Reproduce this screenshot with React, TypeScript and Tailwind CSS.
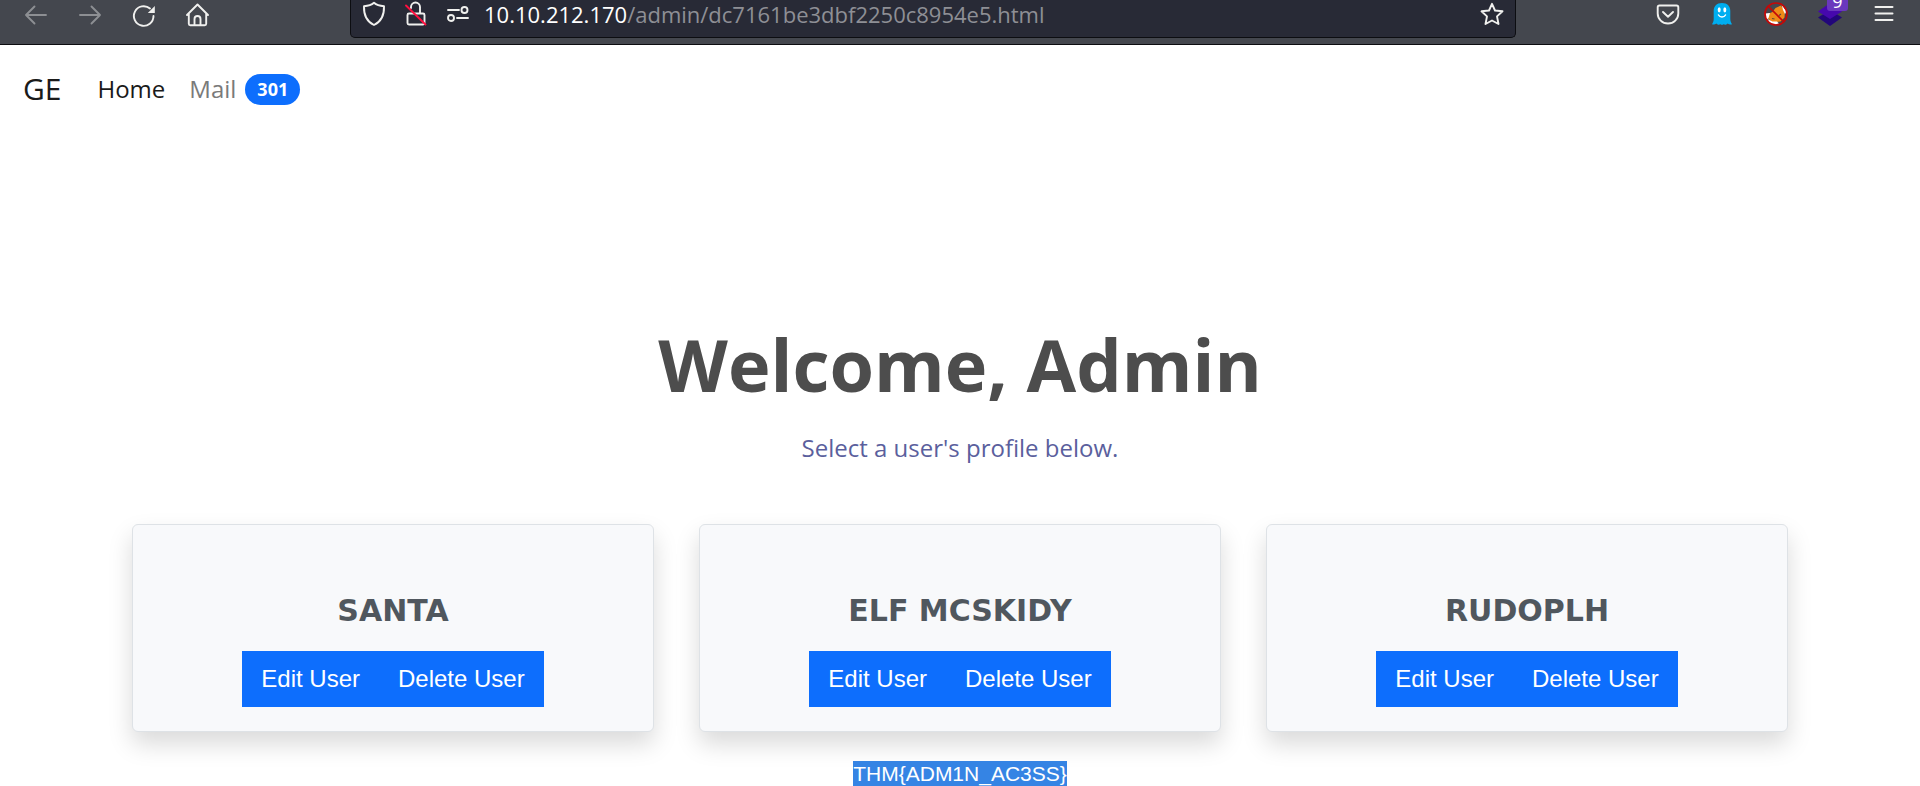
import type { ReactNode } from "react";

const users = ["SANTA", "ELF MCSKIDY", "RUDOPLH"];

function ToolButton({ label, children }: { label: string; children: ReactNode }) {
  return (
    <button type="button" aria-label={label} className="flex size-6 shrink-0 items-center justify-center">
      {children}
    </button>
  );
}

const line = {
  viewBox: "0 0 24 24",
  fill: "none",
  stroke: "currentColor",
  strokeWidth: 1.9,
  strokeLinecap: "round" as const,
  strokeLinejoin: "round" as const,
  className: "size-6 overflow-visible",
};

function BrowserBar() {
  return (
    <header className="flex h-[45px] items-start justify-between border-b border-[#0c0d11] bg-[#44474e] px-6 text-[#f0f0ee]">
      <div className="flex gap-[30px] pt-[3px]">
        <span className="flex gap-[30px] text-[#8d8f93]">
          <ToolButton label="Back">
            <svg {...line}><path d="M22 12H2M10.500 3.500L2 12l8.500 8.500" /></svg>
          </ToolButton>
          <ToolButton label="Forward">
            <svg {...line}><path d="M2 12h20M13.500 3.500L22 12l-8.500 8.500" /></svg>
          </ToolButton>
        </span>
        <ToolButton label="Reload">
          <svg {...line}>
            <path d="M21.500 13a9.800 9.800 0 1 1-3.500-7.500" />
            <path d="M22.800 3v7h-7z" fill="currentColor" stroke="none" />
          </svg>
        </ToolButton>
        <ToolButton label="Home">
          <svg {...line}>
            <path d="M1 12L11.500 1.500 22 12M2.800 10.500v10.200a1.500 1.500 0 0 0 1.500 1.500h14.400a1.500 1.500 0 0 0 1.500-1.500V10.500M8.500 22v-6a3 3 0 0 1 6 0v6" />
          </svg>
        </ToolButton>
      </div>

      <div className="flex h-[38px] w-[1166px] items-start gap-[18px] rounded-b-[5px] border border-t-0 border-[#0c0d11] bg-[#282a36] pl-[11px] pr-[11px] pt-[2px]">
        <ToolButton label="Tracking protection">
          <svg {...line}>
            <path d="M12 .8C9.500 3 5.500 4 2 4.300 1.700 12.500 4.500 19.500 12 23 19.500 19.500 22.300 12.500 22 4.300 18.500 4 14.500 3 12 .8z" />
          </svg>
        </ToolButton>
        <ToolButton label="Connection is not secure">
          <svg {...line}>
            <path d="M7 6V5a4.500 4.500 0 0 1 9 0v6.500M5 11.500h14a1.500 1.500 0 0 1 1.500 1.500v8a1.500 1.500 0 0 1-1.500 1.500H5A1.500 1.500 0 0 1 3.500 21v-8A1.500 1.500 0 0 1 5 11.500z" />
            <path d="M2 3.500l19.500 19" stroke="#ff0f3f" />
          </svg>
        </ToolButton>
        <ToolButton label="Site permissions">
          <svg {...line}>
            <path d="M2 8h11M11 16h11" />
            <circle cx="18.500" cy="8" r="3" />
            <circle cx="5" cy="16" r="3" />
          </svg>
        </ToolButton>
        <p className="-ml-1 min-w-0 flex-1 text-[22px] leading-6 text-[#8e8f95]">
          <span className="text-white">10.10.212.170</span>/admin/dc7161be3dbf2250c8954e5.html
        </p>
        <ToolButton label="Bookmark this page">
          <svg {...line}>
            <path d="M12 1.800l3 6.700 7.500.8-5.500 5.100 1.500 7.600L12 18.500 5.500 22 7 14.400 1.500 9.300 9 8.500z" />
          </svg>
        </ToolButton>
      </div>

      <div className="flex gap-[30px] pt-[2px]">
        <ToolButton label="Save to Pocket">
          <svg {...line}>
            <path d="M3.500 3.500h17a1.800 1.800 0 0 1 1.800 1.800V11.500a10.300 10 0 0 1-20.600 0V5.300a1.800 1.800 0 0 1 1.800-1.800zM7 10l5 4.700L17 10" />
          </svg>
        </ToolButton>
        <ToolButton label="Ghostery">
          <svg viewBox="0 0 24 24" className="size-6">
            <path d="M12 1c-5.500 0-8.300 3.500-8.300 8v8c0 2-.7 3.800-1.700 5.300 1.700.5 3.200.3 4.300-.7 1 1.400 2.700 1.600 3.800.3 1 1.200 2.800 1.200 3.800 0 1.100 1.300 2.800 1.100 3.800-.3 1.100 1 2.600 1.200 4.300.7-1-1.500-1.700-3.300-1.700-5.300V9c0-4.500-2.800-8-8.300-8z" fill="#00aef0" />
            <ellipse cx="9.200" cy="7.800" rx="1.500" ry="2.600" fill="#fff" />
            <ellipse cx="14.800" cy="7.800" rx="1.500" ry="2.600" fill="#fff" />
            <path d="M8.500 13c1.500 2.600 5.500 2.600 7 0" fill="none" stroke="#fff" strokeWidth="1.500" strokeLinecap="round" />
          </svg>
        </ToolButton>
        <ToolButton label="FoxyProxy">
          <svg viewBox="0 0 24 24" className="size-6 overflow-visible">
            <path d="M3.500 12l5-2 3-4 5.500-2.500 4 6-.5 6-4 4-7.500 1-5-4z" fill="#ef8b17" />
            <path d="M1 11.500l5-.5-1.500 5L2.500 18zM17.500 2.500l5 7-1.500 2.500-2-4zM3.500 17l5 2.500 4.500 0 2 2-4 1-5-1z" fill="#fff" />
            <path d="M8 16.500l2.500.5M15 13.500l2-1.500" stroke="#5c4a3a" strokeWidth="1.100" />
            <circle cx="12" cy="12" r="11" fill="none" stroke="#c40808" strokeWidth="1.700" />
            <path d="M4.500 4.500l15 15" stroke="#c40808" strokeWidth="1.700" />
          </svg>
        </ToolButton>
        <span className="relative flex">
          <ToolButton label="Wappalyzer">
            <svg viewBox="0 0 24 24" className="size-6 overflow-visible">
              <path d="M12 8l12 7.500L12 24 0 15.500z" fill="#22067a" />
              <path d="M12 1l12 8.500L12 17 0 9.500z" fill="#4608ad" />
            </svg>
          </ToolButton>
          <span className="absolute -top-3 left-[9px] flex h-[21px] w-[21px] items-center justify-center rounded-[3px] bg-[#6a38bd] text-lg leading-none text-white">9</span>
        </span>
        <ToolButton label="Open application menu">
          <svg {...line} strokeWidth={2}><path d="M3.500 5h17M3.500 11.500h17M3.500 18h17" /></svg>
        </ToolButton>
      </div>
    </header>
  );
}

function UserCard({ name }: { name: string }) {
  return (
    <article className="flex flex-col items-center rounded-md border border-[#dee2e6] bg-[#f8f9fb] pb-6 pt-[68px] shadow-[0_12px_24px_rgba(0,0,0,0.15)]">
      <h2 className="mb-[22px] font-['DejaVu_Sans',sans-serif] text-[30px] font-bold leading-9 text-[#50575e]">{name}</h2>
      <div className="flex font-['Liberation_Sans',sans-serif] text-2xl leading-9 text-white">
        <button type="button" className="bg-[#0d6efd] px-[19px] py-[10px]">Edit User</button>
        <button type="button" className="bg-[#0d6efd] px-[19px] py-[10px]">Delete User</button>
      </div>
    </article>
  );
}

export default function App() {
  return (
    <div className="min-h-screen overflow-hidden bg-white font-['Open_Sans','Noto_Sans',sans-serif]">
      <BrowserBar />
      <nav className="flex items-center px-[23px] py-[21px] text-2xl leading-9">
        <a href="#" className="mr-9 text-[30px] leading-[45px] text-[#1a1a1a]">GE</a>
        <a href="#" className="mr-6 text-[#1a1a1a]">Home</a>
        <a href="#" className="flex items-center text-[#7a7a7a]">
          Mail
          <span className="ml-[9px] mt-[2px] rounded-full bg-[#0d6efd] px-3 py-[6px] text-lg font-bold leading-[19px] text-white">301</span>
        </a>
      </nav>
      <main className="px-6 pt-[189px] text-center">
        <h1 className="text-[72px] font-bold leading-[86px] text-[#4d4d4d]">Welcome, Admin</h1>
        <p className="mt-[23px] text-2xl leading-9 text-[#5b5f9d]">Select a user's profile below.</p>
        <section className="mx-auto mt-[58px] grid max-w-[1656px] grid-cols-3 gap-[45px]">
          {users.map((name) => (
            <UserCard key={name} name={name} />
          ))}
        </section>
        <p className="mt-[29px] font-['Liberation_Sans',sans-serif] text-[21px] leading-[25px] text-white">
          <span className="inline-block bg-[#3584e4]">THM&#123;ADM1N_AC3SS&#125;</span>
        </p>
      </main>
    </div>
  );
}
